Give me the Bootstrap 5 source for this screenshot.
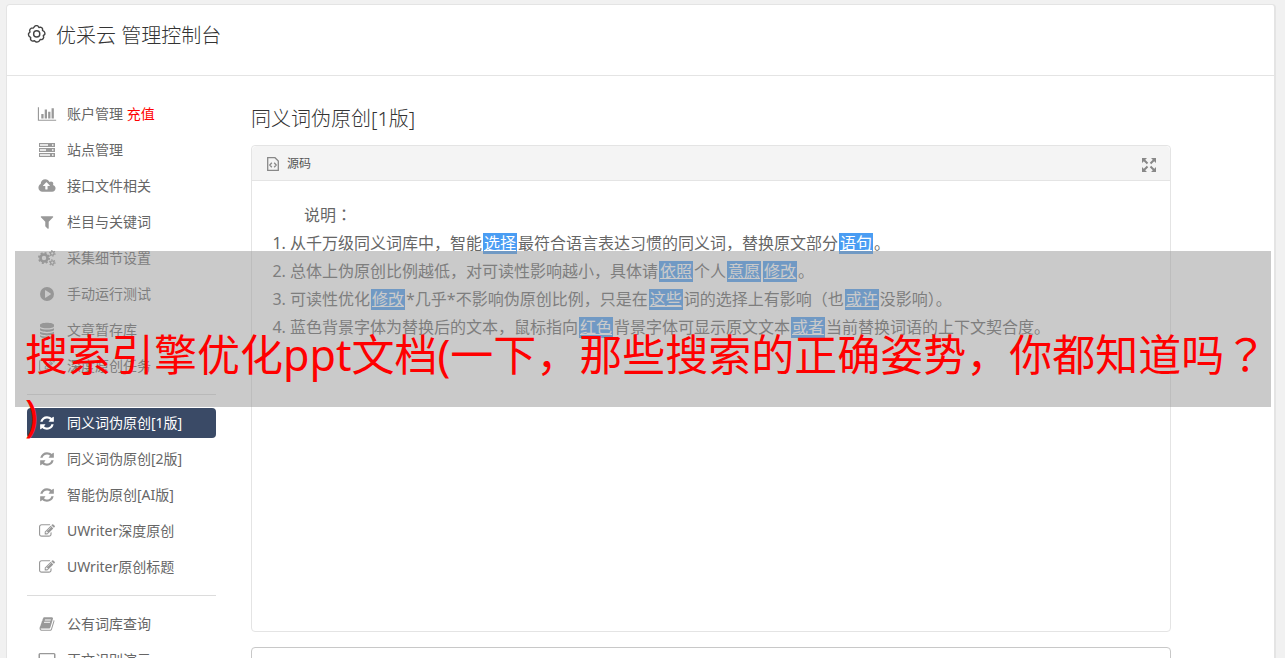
<!DOCTYPE html>
<html lang="zh-CN">
<head>
<meta charset="utf-8">
<meta name="viewport" content="width=device-width, initial-scale=1">
<title>优采云 管理控制台</title>
<link href="https://cdn.jsdelivr.net/npm/bootstrap@5.3.0/dist/css/bootstrap.min.css" rel="stylesheet">
<style>
  body {
    font-family: "Noto Sans", "Noto Sans CJK SC", sans-serif;
    font-size: 14px;
    line-height: 20px;
    color: #666;
    background: #f1f1f1;
  }
  .shell {
    margin: 4px 9px 0 6px;
    background: #fff;
    border: 1px solid #e4e4e4;
    border-right-width: 2px;
    border-bottom: 0;
    border-radius: 4px 4px 0 0;
  }
  .shell-head { height: 71px; padding: 16px 20px 0; gap: 9px; border-bottom: 1px solid #e4e4e4; }
  .page-title { font-size: 20px; line-height: 30px; color: #333; font-weight: 300; }
  .shell-body { padding: 23px 20px 0; gap: 35px; }
  .side { width: 189px; }
  .side .nav-link {
    height: 30px;
    margin-bottom: 6px;
    padding: 0 10px;
    gap: 10px;
    color: #666;
    border-radius: 4px;
    white-space: nowrap;
  }
  .side .nav-link svg { width: 20px; height: 16px; fill: #999; color: #999; }
  .side .nav-link.active { background: #3a4a66; color: #fff; }
  .side .nav-link.active svg { fill: #fff; }
  .side hr { margin: 7px 0 13px; border-color: #dcdcdc; color: #dcdcdc; opacity: 1; }
  .topup { color: #f00; }
  .work { max-width: 920px; min-width: 0; padding-top: 5px; }
  .work .page-title { margin-bottom: 11px; }
  .source { border-color: #e4e4e4; border-radius: 4px; margin-bottom: 15px; }
  .source .card-header {
    height: 35px;
    padding: 2px 14px 0 15px;
    background: #f4f4f4;
    border-color: #e4e4e4;
    font-size: 12px;
    color: #555;
  }
  .source .card-body { min-height: 450px; padding: 20px; font-size: 16px; line-height: 28px; color: #666; }
  .source .lead-in { padding-left: 32px; }
  .source ol { padding-left: 18px; }
  .swap {
    display: inline-block;
    margin: 0 1px;
    padding: 0 1px;
    line-height: 21px;
    color: #fff;
    background: #4a9df3;
  }
  .swap:hover { color: #fff; }
  .centred-mark { font-family: "Noto Sans CJK TC", sans-serif; line-height: 1; }
  .result { height: 120px; border-color: #c8c8c8; border-radius: 4px; }
  .icon-btn { padding: 0; border: 0; line-height: 1; }
  .caption {
    top: 251px;
    left: 15px;
    right: 14px;
    height: 156px;
    padding: 74px 0 0 10px;
    background: rgba(150, 150, 150, .5);
    color: #f00;
    font-size: 43px;
    line-height: 60px;
    word-break: break-all;
    line-break: anywhere;
  }
</style>
</head>
<body class="vh-100 overflow-hidden position-relative">

<svg class="d-none" aria-hidden="true">
  <symbol id="i-chart" viewBox="0 0 2048 1792"><path d="M640 896v512h-256v-512h256zM1024 384v1024h-256v-1024h256zM2048 1536v128h-2048v-1536h128v1408h1920zM1408 640v768h-256v-768h256zM1792 256v1152h-256v-1152h256z"/></symbol>
  <symbol id="i-server" viewBox="0 0 18 16"><path fill-rule="evenodd" d="M1 1h16v4H1zM2 2.300v1.400h8V2.300zM14 2.300v1.400h1.500V2.300zM1 6h16v4H1zM2 7.300v1.400h6V7.300zM14 7.300v1.400h1.500V7.300zM1 11h16v4H1zM2 12.300v1.400h10v-1.400zM14 12.300v1.400h1.500v-1.400z"/></symbol>
  <symbol id="i-cloud" viewBox="0 0 1920 1792"><path d="M1280 864q0-14-9-23l-352-352q-9-9-23-9t-23 9l-351 351q-10 12-10 24 0 14 9 23t23 9h224v352q0 13 9.500 22.500t22.500 9.500h192q13 0 22.500-9.500t9.500-22.500v-352h224q13 0 22.500-9.500t9.500-22.500zm640 288q0 159-112.500 271.500t-271.500 112.500h-1088q-185 0-316.500-131.500t-131.500-316.500q0-130 70-240t188-165q-2-30-2-43 0-212 150-362t362-150q156 0 285.500 87t188.500 231q71-62 166-62 106 0 181 75t75 181q0 76-41 138 130 31 213.500 135.500t83.500 238.500z"/></symbol>
  <symbol id="i-filter" viewBox="0 0 1792 1792"><path d="M1595 295q17 41-14 70l-493 493v742q0 42-39 59-13 5-25 5-27 0-45-19l-256-256q-19-19-19-45v-486l-493-493q-31-29-14-70 17-39 59-39h1280q42 0 59 39z"/></symbol>
  <symbol id="i-cogs" viewBox="0 0 18 16"><g fill="none" stroke="currentColor"><circle cx="6" cy="8" r="3.500" stroke-width="2.600"/><circle cx="6" cy="8" r="5.100" stroke-width="1.800" stroke-dasharray="2 2.005"/><circle cx="14.300" cy="3.400" r="1.800" stroke-width="1.300"/><circle cx="14.300" cy="3.400" r="2.800" stroke-width="1.100" stroke-dasharray="1.300 1.630"/><circle cx="14.300" cy="12.600" r="1.800" stroke-width="1.300"/><circle cx="14.300" cy="12.600" r="2.800" stroke-width="1.100" stroke-dasharray="1.300 1.630"/></g></symbol>
  <symbol id="i-play" viewBox="0 0 16 16"><path fill-rule="evenodd" d="M8 1a7 7 0 1 0 0 14A7 7 0 0 0 8 1zM6 4.600Q6 4 6.600 4.300L11.600 7.500Q12.200 8 11.600 8.500L6.600 11.700Q6 12 6 11.400z"/></symbol>
  <symbol id="i-database" viewBox="0 0 16 16"><path d="M1 3c0-3 14-3 14 0v1.200c0 2.800-14 2.800-14 0zM1 6.200c2 1.800 12 1.800 14 0v1.600c0 2.800-14 2.800-14 0zM1 9.800c2 1.800 12 1.800 14 0v1.500c0 2.800-14 2.800-14 0zM1 13.200c2 1.800 12 1.800 14 0v1c0 2.800-14 2.800-14 0z"/></symbol>
  <symbol id="i-edit" viewBox="0 0 1792 1792"><path d="M888 1184l116-116-152-152-116 116v56h96v96h56zm440-720q-16-16-33 1l-350 350q-17 17-1 33t33-1l350-350q17-17 1-33zm80 594v190q0 119-84.500 203.500t-203.500 84.500h-832q-119 0-203.500-84.500t-84.500-203.500v-832q0-119 84.500-203.500t203.500-84.500h832q63 0 117 25 15 7 18 23 3 17-9 29l-49 49q-14 14-32 8-23-6-45-6h-832q-66 0-113 47t-47 113v832q0 66 47 113t113 47h832q66 0 113-47t47-113v-126q0-13 9-22l64-64q15-15 35-7t20 29zm-96-738l288 288-672 672h-288v-288zm444 132l-92 92-288-288 92-92q28-28 68-28t68 28l152 152q28 28 28 68t-28 68z"/></symbol>
  <symbol id="i-refresh" viewBox="0 0 1792 1792"><path d="M1639 1056q0 5-1 7-64 268-268 434.500t-478 166.500q-146 0-282.500-55t-243.500-157l-129 129q-19 19-45 19t-45-19-19-45v-448q0-26 19-45t45-19h448q26 0 45 19t19 45-19 45l-137 137q71 66 161 102t187 36q134 0 250-65t186-179q11-17 53-117 8-23 30-23h192q13 0 22.500 9.500t9.500 22.500zm25-800v448q0 26-19 45t-45 19h-448q-26 0-45-19t-19-45 19-45l138-138q-148-137-349-137-134 0-250 65t-186 179q-11 17-53 117-8 23-30 23h-199q-13 0-22.500-9.500t-9.500-22.500v-7q65-268 270-434.500t480-166.500q146 0 284 55.500t245 156.500l130-129q19-19 45-19t45 19 19 45z"/></symbol>
  <symbol id="i-book" viewBox="0 0 1792 1792"><path d="M1703 478q40 57 18 129l-275 906q-19 64-76.500 107.500t-122.500 43.500h-923q-77 0-148.500-53.500t-99.500-131.500q-24-67-2-127 0-4 3-27t4-37q1-8-3-21.500t-3-19.500q2-11 8-21t16.500-23.500 16.500-23.500q23-38 45-91.500t30-91.500q3-10 .5-30t-.5-28q3-11 17-28t17-23q21-36 42-92t25-90q1-9-2.500-32t.5-28q4-13 22-30.500t22-22.500q19-26 42.500-84.500t27.500-96.500q1-8-3-25.500t-2-26.500q2-8 9-18t18-23 17-21q8-12 16.500-30.500t15-35 16-36 19.500-32 26.500-23.500 36-11.500 47.500 5.500l-1 3q38-9 51-9h761q74 0 114 56t18 130l-274 906q-36 119-71.500 153.500t-128.500 34.500h-869q-27 0-38 15-11 16-1 43 24 70 144 70h923q29 0 56-15.500t35-41.500l300-987q7-22 5-57 38 15 59 43zm-1064 2q-4 13 2 22.500t20 9.500h608q13 0 25.500-9.500t16.500-22.500l21-64q4-13-2-22.500t-20-9.500h-608q-13 0-25.500 9.500t-16.500 22.500zm-83 256q-4 13 2 22.500t20 9.500h608q13 0 25.500-9.500t16.500-22.500l21-64q4-13-2-22.500t-20-9.500h-608q-13 0-25.500 9.500t-16.500 22.500z"/></symbol>
  <symbol id="i-screen" viewBox="0 0 18 16"><path fill-rule="evenodd" d="M2 1h14q1.500 0 1.500 1.500v9Q17.500 13 16 13H2Q.5 13 .5 11.500v-9Q.5 1 2 1zM2 2.200v9.500h14V2.200zM5 14h8v1.500H5z"/></symbol>
</svg>

<div class="shell">
  <header class="shell-head d-flex">
    <svg class="mt-1 flex-shrink-0" width="20" height="20" viewBox="0 0 20 20" fill="none" stroke="#444" stroke-width="1.400" aria-hidden="true">
      <path stroke-linejoin="round" d="M8 1.600Q9.500.8 11 1.600L11.900 3.100L13.500 2.700Q15.200 3 15.600 4.600L15.500 6.100L17 7Q18.200 8.400 17.800 10L16.300 11.200L16.700 12.900Q16.400 14.500 14.900 15.200L13.300 15L12.300 16.600Q10.600 17.900 9 17.600L7.500 16.300L5.600 16.700Q4 16.200 3.500 14.800L3.700 13.100L2.200 12Q1.200 10.500 1.600 9L3 7.700L2.600 6Q2.900 4.400 4.400 3.700L6.200 3.700Z" transform="translate(0 -.6)"/>
      <circle cx="9.700" cy="8.900" r="3.100"/>
    </svg>
    <h1 class="page-title mb-0">优采云 管理控制台</h1>
  </header>

  <div class="shell-body d-flex align-items-start">
    <nav class="side nav flex-column flex-nowrap flex-shrink-0" aria-label="主菜单">
      <a class="nav-link d-flex align-items-center" href="#"><svg><use href="#i-chart"/></svg><span>账户管理 <span class="topup">充值</span></span></a>
      <a class="nav-link d-flex align-items-center" href="#"><svg><use href="#i-server"/></svg>站点管理</a>
      <a class="nav-link d-flex align-items-center" href="#"><svg><use href="#i-cloud"/></svg>接口文件相关</a>
      <a class="nav-link d-flex align-items-center" href="#"><svg><use href="#i-filter"/></svg>栏目与关键词</a>
      <a class="nav-link d-flex align-items-center" href="#"><svg><use href="#i-cogs"/></svg>采集细节设置</a>
      <a class="nav-link d-flex align-items-center" href="#"><svg><use href="#i-play"/></svg>手动运行测试</a>
      <a class="nav-link d-flex align-items-center" href="#"><svg><use href="#i-database"/></svg>文章暂存库</a>
      <a class="nav-link d-flex align-items-center" href="#"><svg><use href="#i-edit"/></svg>深度原创任务</a>
      <hr>
      <a class="nav-link d-flex align-items-center active" aria-current="page" href="#"><svg><use href="#i-refresh"/></svg>同义词伪原创[1版]</a>
      <a class="nav-link d-flex align-items-center" href="#"><svg><use href="#i-refresh"/></svg>同义词伪原创[2版]</a>
      <a class="nav-link d-flex align-items-center" href="#"><svg><use href="#i-refresh"/></svg>智能伪原创[AI版]</a>
      <a class="nav-link d-flex align-items-center" href="#"><svg><use href="#i-edit"/></svg>UWriter深度原创</a>
      <a class="nav-link d-flex align-items-center" href="#"><svg><use href="#i-edit"/></svg>UWriter原创标题</a>
      <hr>
      <a class="nav-link d-flex align-items-center" href="#"><svg><use href="#i-book"/></svg>公有词库查询</a>
      <a class="nav-link d-flex align-items-center" href="#"><svg><use href="#i-screen"/></svg>正文识别演示</a>
    </nav>

    <main class="work flex-grow-1">
      <h2 class="page-title">同义词伪原创[1版]</h2>
      <section class="card source">
        <div class="card-header d-flex align-items-center">
          <svg class="me-2" width="12" height="14" viewBox="0 0 12 14" fill="none" stroke="#888" stroke-width="1.300" aria-hidden="true"><path d="M.7.7h7.300l3.300 3.300v9.300H.7zM4.800 5.800L2.800 8l2 2.200M7.200 5.800l2 2.200-2 2.200"/></svg>
          <span class="me-auto">源码</span>
          <button class="btn icon-btn" type="button" aria-label="全屏">
            <svg width="14" height="14" viewBox="0 0 14 14" fill="#888" stroke="#888" stroke-width="2"><path stroke="none" d="M0 0h5L0 5zM14 0v5L9 0zM0 14V9l5 5zM14 14H9l5-5z"/><path d="M2 2l3.500 3.500M12 2L8.500 5.500M2 12l3.500-3.500M12 12L8.500 8.500"/></svg>
          </button>
        </div>
        <div class="card-body">
          <p class="lead-in mb-0">说明<span class="centred-mark" lang="zh-TW">：</span></p>
          <ol class="mb-0">
            <li>从千万级同义词库中，智能<a class="swap" href="#">选择</a>最符合语言表达习惯的同义词，替换原文部分<a class="swap" href="#">语句</a>。</li>
            <li>总体上伪原创比例越低，对可读性影响越小，具体请<a class="swap" href="#">依照</a>个人<a class="swap" href="#">意愿</a><a class="swap" href="#">修改</a>。</li>
            <li>可读性优化<a class="swap" href="#">修改</a>*几乎*不影响伪原创比例，只是在<a class="swap" href="#">这些</a>词的选择上有影响（也<a class="swap" href="#">或许</a>没影响）。</li>
            <li>蓝色背景字体为替换后的文本，鼠标指向<a class="swap" href="#">红色</a>背景字体可显示原文文本<a class="swap" href="#">或者</a>当前替换词语的上下文契合度。</li>
          </ol>
        </div>
      </section>
      <textarea class="form-control result" aria-label="原创结果"></textarea>
    </main>
  </div>
</div>

<div class="caption position-absolute">搜索引擎优化ppt文档(一下，那些搜索的正确姿势，你都知道吗<span class="centred-mark" lang="zh-TW">？</span>)</div>

<script src="https://cdn.jsdelivr.net/npm/bootstrap@5.3.0/dist/js/bootstrap.bundle.min.js"></script>
</body>
</html>
